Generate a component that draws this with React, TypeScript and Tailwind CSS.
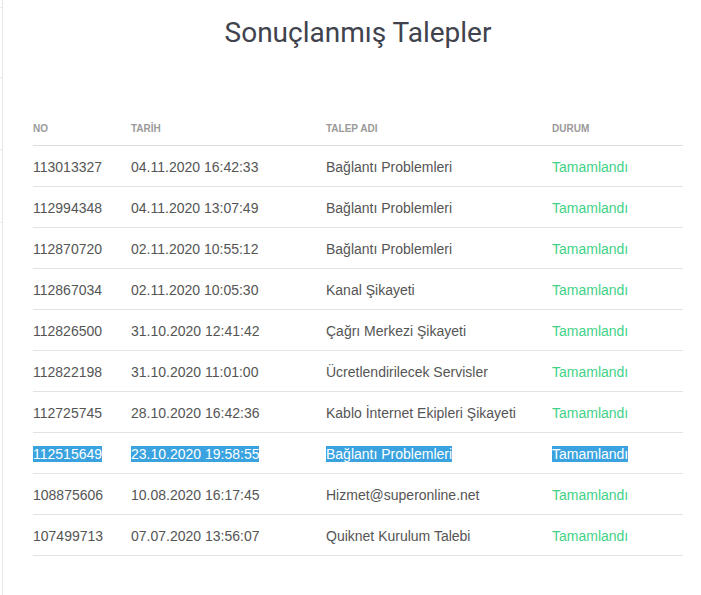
const rows = [
  { no: '113013327', date: '04.11.2020 16:42:33', name: 'Bağlantı Problemleri' },
  { no: '112994348', date: '04.11.2020 13:07:49', name: 'Bağlantı Problemleri' },
  { no: '112870720', date: '02.11.2020 10:55:12', name: 'Bağlantı Problemleri' },
  { no: '112867034', date: '02.11.2020 10:05:30', name: 'Kanal Şikayeti' },
  { no: '112826500', date: '31.10.2020 12:41:42', name: 'Çağrı Merkezi Şikayeti' },
  { no: '112822198', date: '31.10.2020 11:01:00', name: 'Ücretlendirilecek Servisler' },
  { no: '112725745', date: '28.10.2020 16:42:36', name: 'Kablo İnternet Ekipleri Şikayeti' },
  { no: '112515649', date: '23.10.2020 19:58:55', name: 'Bağlantı Problemleri', selected: true },
  { no: '108875606', date: '10.08.2020 16:17:45', name: 'Hizmet@superonline.net' },
  { no: '107499713', date: '07.07.2020 13:56:07', name: 'Quiknet Kurulum Talebi' },
];

function Cell({ children, selected, className }: { children: React.ReactNode; selected?: boolean; className?: string }) {
  return (
    <div className={className}>
      <span className={selected ? 'bg-[#3aa3df] text-white' : ''}>{children}</span>
    </div>
  );
}

export default function App() {
  return (
    <div className="flex min-h-[595px] w-[701px] bg-white font-['Liberation_Sans',Arial,sans-serif]">
      {/* cut-off sidebar edge */}
      <aside className="w-[2px] shrink-0">
        <div className="h-[8px] border-b border-[#ececec]" />
        <div className="h-[70px] border-b border-[#ececec]" />
        <div className="h-[72px] border-b border-[#ececec]" />
        <div className="h-[73px] border-b border-[#ececec]" />
      </aside>
      <main className="flex-1 border-l border-[#e6e6e6] pl-[30px] pr-[17px]">
        <h1 className="mt-[13px] text-center font-['Roboto',sans-serif] text-[28px] leading-[40px] text-[#40434d] pr-[1px]">
          Sonuçlanmış Talepler
        </h1>
        <div className="mt-[70px] w-[650px]">
          <div className="grid grid-cols-[98px_195px_226px_131px] border-b border-[#dedede] pb-[10px] text-[10px] font-bold leading-[12px] text-[#9a9a9a]">
            <div>NO</div>
            <div>TARİH</div>
            <div>TALEP ADI</div>
            <div>DURUM</div>
          </div>
          {rows.map((r) => (
            <div
              key={r.no}
              className="grid h-[41px] grid-cols-[98px_195px_226px_131px] items-center border-b border-[#e3e3e3] pt-[2px] text-[14px] leading-[18px] text-[#555]"
            >
              <Cell selected={r.selected}>{r.no}</Cell>
              <Cell selected={r.selected}>{r.date}</Cell>
              <Cell selected={r.selected}>{r.name}</Cell>
              <Cell selected={r.selected} className={r.selected ? '' : 'text-[#3fd287]'}>
                Tamamlandı
              </Cell>
            </div>
          ))}
        </div>
      </main>
    </div>
  );
}
